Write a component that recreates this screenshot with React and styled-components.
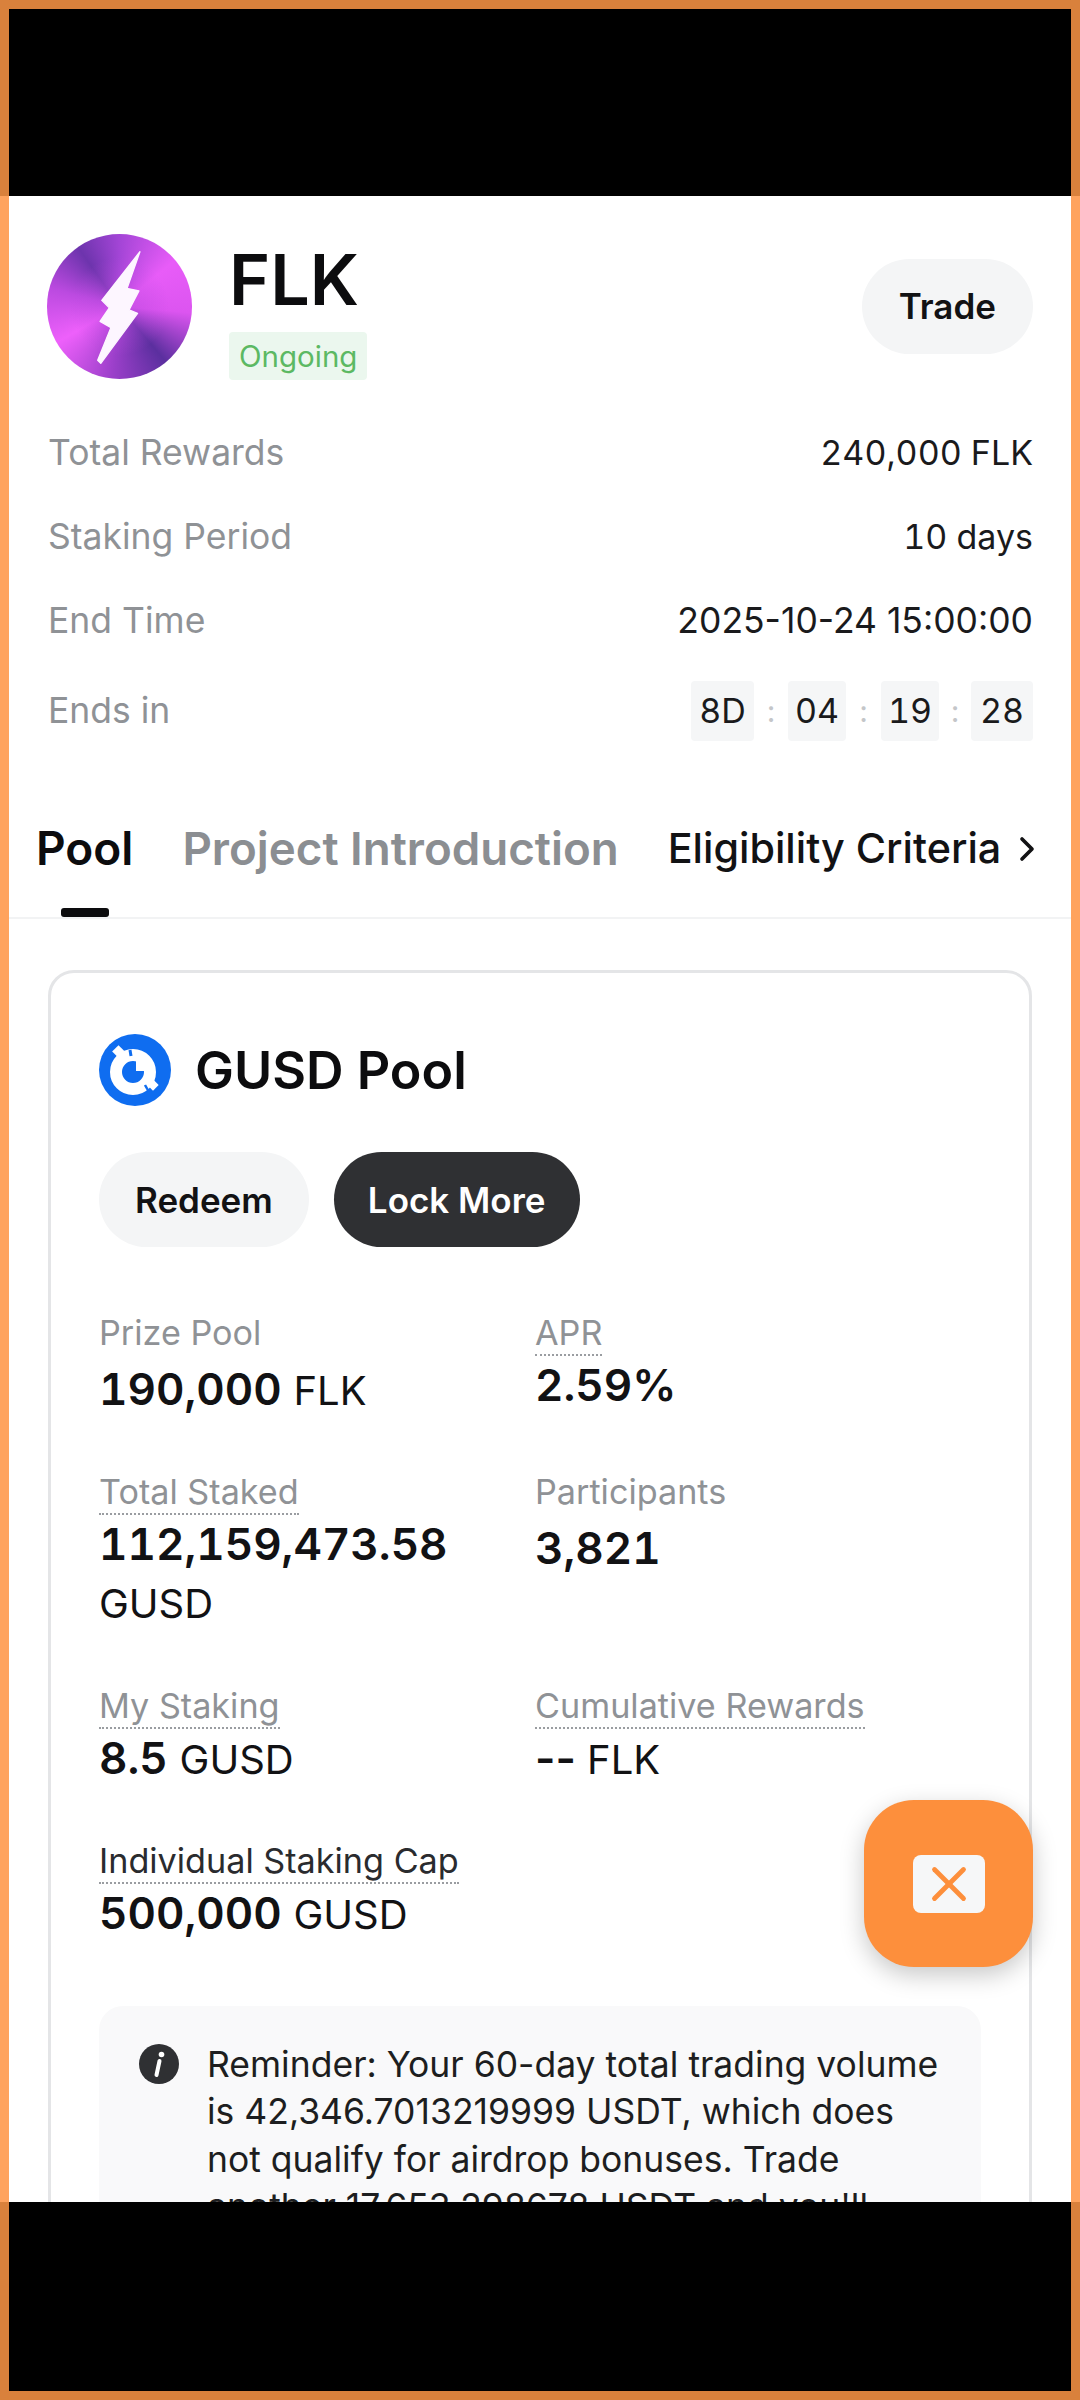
import React from 'react';
import styled, { createGlobalStyle } from 'styled-components';
import { ChevronRight, X } from 'lucide-react';

const GlobalStyle = createGlobalStyle`
  html, body {
    margin: 0;
    padding: 0;
    background: #fff;
  }
  * {
    box-sizing: border-box;
  }
  body {
    font-family: Inter, "Noto Sans", sans-serif;
    color: #121214;
  }
`;

const Screen = styled.div`
  width: 1080px;
  height: 2400px;
  display: flex;
  flex-direction: column;
  overflow: hidden;
`;

const BlackBar = styled.div`
  height: ${(p) => p.$height}px;
  flex: none;
  background: #000;
  border-style: solid;
  border-color: #d9813c;
  border-width: ${(p) => (p.$bottom ? '0 9px 9px' : '9px 9px 0')};
`;

const Content = styled.main`
  position: relative;
  flex: 1;
  min-height: 0;
  overflow: hidden;
  background: #fff;
  border-left: 9px solid #ffa35e;
  border-right: 9px solid #ffa35e;
`;

const Summary = styled.section`
  padding: 38px 38px 0;
`;

const Header = styled.div`
  display: flex;
  align-items: center;
  height: 144px;
`;

const TokenLogo = styled.div`
  width: 145px;
  height: 145px;
  flex: none;
  border-radius: 50%;
  background:
    radial-gradient(circle, rgba(190, 75, 225, 0.75) 0, rgba(190, 75, 225, 0) 48%),
    conic-gradient(
      #a345d6 0deg,
      #e85cf8 50deg,
      #dc55f0 95deg,
      #5b2f9f 140deg,
      #9a3fc9 185deg,
      #ee60fb 240deg,
      #bb4ae0 285deg,
      #6d34ad 325deg,
      #a345d6 360deg
    );
  svg {
    display: block;
    width: 100%;
    height: 100%;
  }
`;

const TokenInfo = styled.div`
  margin-left: 37px;
  flex: 1;
  padding-top: 18px;
`;

const TokenName = styled.h1`
  margin: 0;
  font-size: 70px;
  line-height: 72px;
  font-weight: 600;
  color: #0c0c0e;
  position: relative;
  top: -6px;
`;

const StatusBadge = styled.span`
  display: inline-block;
  margin-top: 10px;
  padding: 0 10px;
  height: 48px;
  line-height: 48px;
  font-size: 29.5px;
  color: #5cb963;
  background: #ebf7ee;
  border-radius: 4px;
`;

const PillButton = styled.button`
  height: 95px;
  padding: 0 ${(p) => p.$pad}px;
  border: none;
  border-radius: 48px;
  font-family: inherit;
  font-size: 35px;
  font-weight: 600;
  color: ${(p) => (p.$dark ? '#fff' : '#121214')};
  background: ${(p) => (p.$dark ? '#2f3033' : '#f4f5f6')};
`;

const InfoList = styled.div`
  display: flex;
  flex-direction: column;
  gap: 40px;
  margin-top: 53px;
  padding-left: 1px;
`;

const InfoRow = styled.div`
  display: flex;
  justify-content: space-between;
  align-items: center;
  min-height: 44px;
  font-size: 34px;
  line-height: 44px;
  &:last-child {
    margin-top: -2px;
  }
`;

const InfoLabel = styled.span`
  font-size: 35.5px;
  color: #8f9296;
`;

const InfoValue = styled.span`
  font-size: ${(p) => (p.$plain ? 35.5 : 34)}px;
  font-variant-numeric: ${(p) => (p.$plain ? 'normal' : 'tabular-nums')};
  color: #1a1a1c;
`;

const Countdown = styled.div`
  display: flex;
  align-items: center;
`;

const TimeBox = styled.span`
  width: ${(p) => p.$width}px;
  height: 60px;
  line-height: 60px;
  text-align: center;
  font-variant-numeric: tabular-nums;
  background: #f5f6f7;
  border-radius: 4px;
  color: #1a1a1c;
`;

const TimeColon = styled.span`
  width: ${(p) => p.$width}px;
  text-align: center;
  color: #c4c6c9;
  font-size: 30px;
`;

const Tabs = styled.nav`
  position: relative;
  display: flex;
  align-items: center;
  gap: 49px;
  height: 129px;
  margin-top: 49px;
  padding: 0 0 11px 27px;
  border-bottom: 2px solid #f2f3f4;
`;

const Tab = styled.span`
  position: relative;
  font-size: ${(p) => p.$size}px;
  font-weight: ${(p) => p.$weight};
  color: ${(p) => p.$color};
  white-space: nowrap;
`;

const ActiveMark = styled.span`
  position: absolute;
  left: 25px;
  bottom: -41px;
  width: 48px;
  height: 9px;
  border-radius: 3px;
  background: #0c0c0e;
`;

const TabChevron = styled(ChevronRight)`
  position: absolute;
  right: 24px;
  top: 39px;
  color: #121214;
`;

const PoolCard = styled.section`
  margin: 51px 39px 0;
  padding: 61px 48px 0;
  border: 3px solid #e4e5e7;
  border-radius: 26px;
`;

const PoolTitle = styled.div`
  display: flex;
  align-items: center;
  gap: 24px;
  height: 72px;
  font-size: 52px;
  font-weight: 600;
  color: #0c0c0e;
  svg {
    display: block;
  }
`;

const PoolActions = styled.div`
  display: flex;
  gap: 25px;
  margin-top: 46px;
`;

const StatGrid = styled.div`
  display: grid;
  grid-template-columns: 436px 1fr;
  row-gap: 51.5px;
  margin-top: 64.5px;
`;

const Stat = styled.div`
  display: flex;
  flex-direction: column;
  align-items: flex-start;
`;

const StatLabel = styled.span`
  font-size: 34.2px;
  line-height: 42px;
  height: ${(p) => (p.$dotted ? 44 : 48)}px;
  white-space: nowrap;
  color: ${(p) => (p.$dark ? '#2a2b2e' : '#8f9296')};
  border-bottom: ${(p) => (p.$dotted ? '2px dotted #9a9da1' : 'none')};
`;

const StatValue = styled.div`
  font-size: 44px;
  line-height: 58px;
  font-weight: 600;
  font-variant-numeric: ${(p) => (p.$plain ? 'normal' : 'tabular-nums')};
  color: #121214;
`;

const StatUnit = styled.span`
  font-size: 40px;
  font-weight: 400;
`;

const Reminder = styled.div`
  display: flex;
  align-items: flex-start;
  gap: 28px;
  margin-top: 61.5px;
  padding: 35px 32px 36px 40px;
  background: #f9f9fa;
  border-radius: 24px;
  font-size: 35.5px;
  line-height: 47.5px;
  color: #1d1e20;
  svg {
    display: block;
    flex: none;
    margin-top: 3px;
  }
`;

const FloatButton = styled.button`
  position: absolute;
  right: 38px;
  top: 1604px;
  width: 169px;
  height: 167px;
  display: flex;
  align-items: center;
  justify-content: center;
  padding: 0;
  border: none;
  border-radius: 50px;
  background: #fd8f3c;
  box-shadow: 0 8px 24px rgba(0, 0, 0, 0.22);
`;

const FloatInner = styled.span`
  width: 72px;
  height: 58px;
  display: flex;
  align-items: center;
  justify-content: center;
  border-radius: 8px;
  background: #f6f7f8;
  color: #fd8f3c;
`;

const BoltIcon = () => (
  <svg viewBox="57 45 426 426">
    <path
      d="M330 97 L292 205 L327 212 L298 268 L323 278 L215 425 L206 416 L245 320 L213 302 L240 262 L218 240 Z"
      fill="#fdf6ff"
      stroke="#fdf6ff"
      strokeWidth="4"
      strokeLinejoin="round"
    />
  </svg>
);

const GusdIcon = () => (
  <svg width="72" height="72" viewBox="0 0 72 72">
    <circle cx="36" cy="36" r="36" fill="#0f6df0" />
    <circle cx="34" cy="38" r="17" fill="none" stroke="#fff" strokeWidth="12" />
    <rect x="15" y="13" width="9" height="9" fill="#fff" transform="rotate(45 19.5 17.5)" />
    <rect x="37" y="26" width="12" height="11" fill="#fff" />
    <rect x="47" y="35" width="7" height="11" fill="#fff" />
    <rect x="50" y="47" width="8" height="8" fill="#fff" transform="rotate(45 54 51)" />
    <path d="M32 22 L31 16" stroke="#0f6df0" strokeWidth="3" />
    <path d="M46 51 L50 58" stroke="#0f6df0" strokeWidth="2.5" />
  </svg>
);

const InfoIcon = () => (
  <svg width="40" height="40" viewBox="0 0 40 40">
    <circle cx="20" cy="20" r="20" fill="#2f3033" />
    <circle cx="22.5" cy="10.5" r="2.8" fill="#fff" />
    <path d="M20.5 17 L17.5 31" stroke="#fff" strokeWidth="4" strokeLinecap="round" />
  </svg>
);

const stats = [
  { label: 'Prize Pool', value: '190,000', unit: 'FLK' },
  { label: 'APR', value: '2.59%', dotted: true },
  { label: 'Total Staked', value: '112,159,473.58', unit: 'GUSD', dotted: true },
  { label: 'Participants', value: '3,821' },
  { label: 'My Staking', value: '8.5', unit: 'GUSD', dotted: true },
  { label: 'Cumulative Rewards', value: '--', unit: 'FLK', dotted: true, plain: true },
  { label: 'Individual Staking Cap', value: '500,000', unit: 'GUSD', dotted: true, dark: true },
];

const App = () => (
  <Screen>
    <GlobalStyle />
    <BlackBar $height={196} />
    <Content>
      <Summary>
        <Header>
          <TokenLogo>
            <BoltIcon />
          </TokenLogo>
          <TokenInfo>
            <TokenName>FLK</TokenName>
            <StatusBadge>Ongoing</StatusBadge>
          </TokenInfo>
          <PillButton $pad={37}>Trade</PillButton>
        </Header>
        <InfoList>
          <InfoRow>
            <InfoLabel>Total Rewards</InfoLabel>
            <InfoValue>240,000 FLK</InfoValue>
          </InfoRow>
          <InfoRow>
            <InfoLabel>Staking Period</InfoLabel>
            <InfoValue>10 days</InfoValue>
          </InfoRow>
          <InfoRow>
            <InfoLabel>End Time</InfoLabel>
            <InfoValue $plain>2025-10-24 15:00:00</InfoValue>
          </InfoRow>
          <InfoRow>
            <InfoLabel>Ends in</InfoLabel>
            <Countdown>
              <TimeBox $width={63}>8D</TimeBox>
              <TimeColon $width={34}>:</TimeColon>
              <TimeBox $width={58}>04</TimeBox>
              <TimeColon $width={35}>:</TimeColon>
              <TimeBox $width={58}>19</TimeBox>
              <TimeColon $width={32}>:</TimeColon>
              <TimeBox $width={62}>28</TimeBox>
            </Countdown>
          </InfoRow>
        </InfoList>
      </Summary>
      <Tabs>
        <Tab $size={46} $weight={600} $color="#0c0c0e">
          Pool
          <ActiveMark />
        </Tab>
        <Tab $size={45.7} $weight={600} $color="#8b8e92">Project Introduction</Tab>
        <Tab $size={41.3} $weight={500} $color="#121214">Eligibility Criteria</Tab>
        <TabChevron size={40} strokeWidth={2.2} />
      </Tabs>
      <PoolCard>
        <PoolTitle>
          <GusdIcon />
          GUSD Pool
        </PoolTitle>
        <PoolActions>
          <PillButton $pad={36}>Redeem</PillButton>
          <PillButton $pad={34} $dark>Lock More</PillButton>
        </PoolActions>
        <StatGrid>
          {stats.map((s) => (
            <Stat key={s.label}>
              <StatLabel $dotted={s.dotted} $dark={s.dark}>{s.label}</StatLabel>
              <StatValue $plain={s.plain}>
                {s.value} {s.unit && <StatUnit>{s.unit}</StatUnit>}
              </StatValue>
            </Stat>
          ))}
        </StatGrid>
        <Reminder>
          <InfoIcon />
          <span>
            Reminder: Your 60-day total trading volume is 42,346.7013219999 USDT, which does not
            qualify for airdrop bonuses. Trade another 17,653.298678 USDT and you'll qualify for
            airdrop bonuses.
          </span>
        </Reminder>
      </PoolCard>
      <FloatButton>
        <FloatInner>
          <X size={58} strokeWidth={2} />
        </FloatInner>
      </FloatButton>
    </Content>
    <BlackBar $height={198} $bottom />
  </Screen>
);

export default App;
